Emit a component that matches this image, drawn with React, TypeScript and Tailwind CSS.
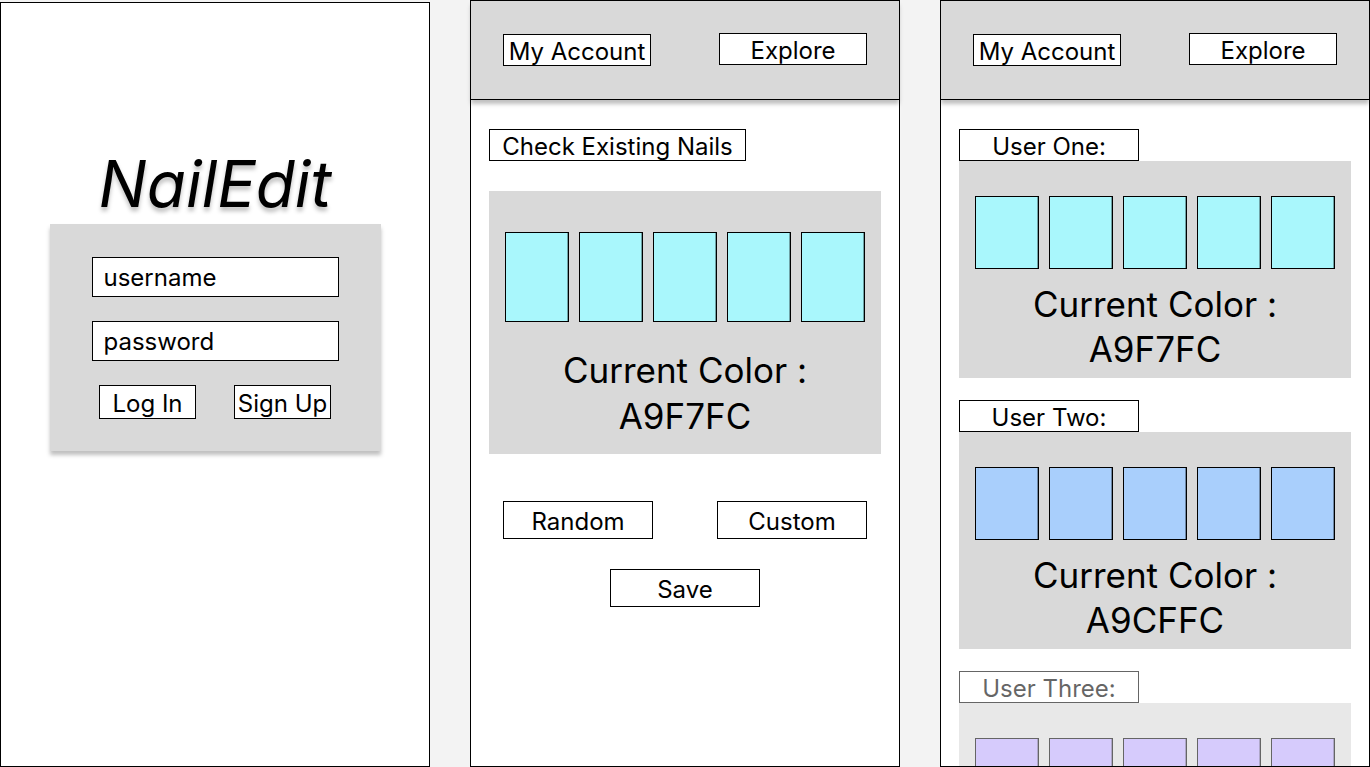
const nailsOne = ['#a9f7fc', '#a9f7fc', '#a9f7fc', '#a9f7fc', '#a9f7fc']

function Box({ label, className = '' }: { label: string; className?: string }) {
  return (
    <div
      className={`flex items-center justify-center border border-black bg-white pt-[3px] text-[24px] leading-none ${className}`}
    >
      {label}
    </div>
  )
}

function Header() {
  return (
    <div className="relative z-10 flex h-[99px] shrink-0 items-center justify-between border-b border-black bg-[#d9d9d9] px-[32px] shadow-[0_4px_4px_rgba(0,0,0,0.25)]">
      <Box label="My Account" className="h-[32px] w-[148px]" />
      <Box label="Explore" className="h-[32px] w-[148px] -mt-[2px]" />
    </div>
  )
}

function Nails({ color, h }: { color: string; h: string }) {
  return (
    <div className="flex justify-between">
      {[0, 1, 2, 3, 4].map((i) => (
        <div
          key={i}
          className={`${h} w-[64px] border border-black shadow-[inset_-1px_0_0_rgba(0,0,0,0.35)]`}
          style={{ backgroundColor: color }}
        />
      ))}
    </div>
  )
}

function UserCard({
  name,
  color,
  code,
  faded,
}: {
  name: string
  color: string
  code?: string
  faded?: boolean
}) {
  return (
    <div className={`flex flex-col ${faded ? 'opacity-60' : ''}`}>
      <Box label={name} className="h-[32px] w-[180px]" />
      <div className="flex h-[217px] flex-col bg-[#d9d9d9] px-4 pt-[35px]">
        <Nails color={color} h="h-[73px]" />
        {code && (
          <div className="mt-[13px] text-center text-[35px] leading-[45px]">
            <div>Current Color :</div>
            <div>{code}</div>
          </div>
        )}
      </div>
    </div>
  )
}

export default function App() {
  return (
    <div
      className="flex h-[767px] w-[1370px] gap-10 overflow-hidden bg-[#f3f3f3] text-black"
      style={{ fontFamily: 'Inter, "Noto Sans", sans-serif' }}
    >
      {/* login */}
      <div className="mt-[2px] flex h-[765px] w-[430px] shrink-0 flex-col items-center border border-black bg-white pt-[148px]">
        <div className="text-[64px] italic leading-[66px] [text-shadow:0_4px_4px_rgba(0,0,0,0.25)]">
          NailEdit
        </div>
        <div className="mt-[7px] flex h-[227px] w-[331px] flex-col items-center bg-[#d9d9d9] pt-[33px] shadow-[0_4px_4px_rgba(0,0,0,0.25)]">
          <div className="flex h-[40px] w-[247px] items-center border border-black bg-white pl-[11px] pt-[2px] text-[24px]">
            username
          </div>
          <div className="mt-[24px] flex h-[40px] w-[247px] items-center border border-black bg-white pl-[11px] pt-[2px] text-[24px]">
            password
          </div>
          <div className="mt-[24px] flex w-[232px] justify-between">
            <Box label="Log In" className="h-[34px] w-[97px]" />
            <Box label="Sign Up" className="h-[34px] w-[97px]" />
          </div>
        </div>
      </div>

      {/* editor */}
      <div className="flex h-[767px] w-[430px] shrink-0 flex-col border border-black bg-white">
        <Header />
        <div className="flex flex-col px-[18px] pt-[29px]">
          <Box label="Check Existing Nails" className="h-[32px] w-[257px]" />
          <div className="mt-[30px] flex h-[263px] flex-col bg-[#d9d9d9] px-4 pt-[41px]">
            <Nails color={nailsOne[0]} h="h-[90px]" />
            <div className="mt-[25px] text-center text-[35px] leading-[46px]">
              <div>Current Color :</div>
              <div>A9F7FC</div>
            </div>
          </div>
          <div className="mt-[47px] flex justify-between px-[14px]">
            <Box label="Random" className="h-[38px] w-[150px]" />
            <Box label="Custom" className="h-[38px] w-[150px]" />
          </div>
          <div className="mt-[30px] flex justify-center">
            <Box label="Save" className="h-[38px] w-[150px]" />
          </div>
        </div>
      </div>

      {/* explore */}
      <div className="flex h-[767px] w-[430px] shrink-0 flex-col overflow-hidden border border-black bg-white">
        <Header />
        <div className="flex flex-col gap-[22px] px-[18px] pt-[29px]">
          <UserCard name="User One:" color="#a9f7fc" code="A9F7FC" />
          <UserCard name="User Two:" color="#a9cffc" code="A9CFFC" />
          <UserCard name="User Three:" color="#bba9fb" faded />
        </div>
      </div>
    </div>
  )
}
